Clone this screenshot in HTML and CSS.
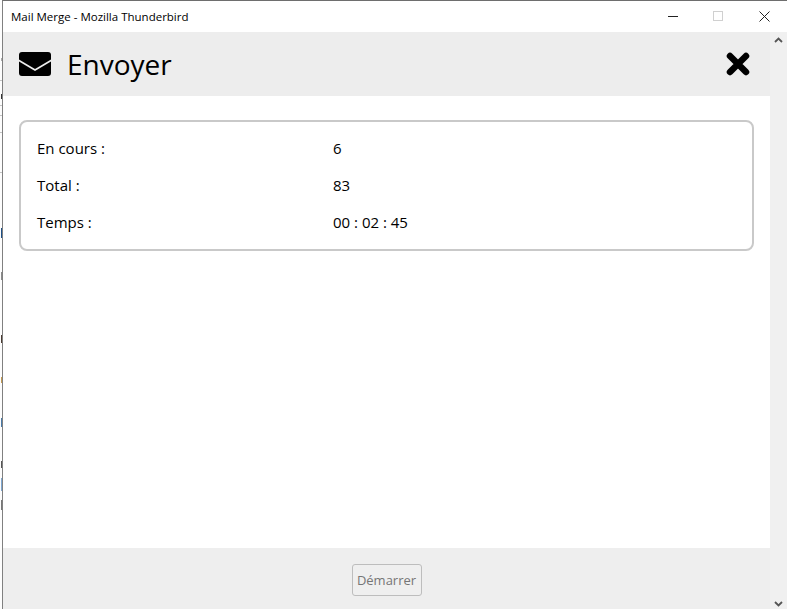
FILE: index.html
```html
<!DOCTYPE html>
<html lang="fr">
<head>
<meta charset="utf-8">
<title>Mail Merge - Mozilla Thunderbird</title>
<link rel="stylesheet" href="styles.css">
</head>
<body>
<div class="desktop">
  <div class="behind">
    <i class="mark mark-a"></i><i class="mark mark-b"></i><i class="mark mark-c"></i><i class="mark mark-d"></i><i class="mark mark-e"></i><i class="mark mark-f"></i><i class="mark mark-g"></i><i class="mark mark-h"></i><i class="mark mark-i"></i><i class="mark mark-j"></i>
    <i class="tick tick-a"></i><i class="tick tick-b"></i><i class="tick tick-c"></i><i class="tick tick-d"></i><i class="tick tick-e"></i>
  </div>
  <div class="window">
    <div class="titlebar">
      <span class="title">Mail Merge - Mozilla Thunderbird</span>
      <div class="controls">
        <svg class="ctl" width="11" height="11" viewBox="0 0 11 11"><path d="M0 5.500h10" stroke="#222" fill="none"/></svg>
        <svg class="ctl" width="11" height="11" viewBox="0 0 11 11"><rect x="0.500" y="0.500" width="9" height="9" fill="none" stroke="#d0d0d0"/></svg>
        <svg class="ctl ctl-close" width="11" height="11" viewBox="0 0 11 11"><path d="M0.500 0.500l10 10M10.500 0.500l-10 10" stroke="#222" fill="none"/></svg>
      </div>
    </div>
    <div class="frame">
      <div class="main">
        <header class="head">
          <div class="head-left">
            <svg class="mail" width="32" height="24" viewBox="0 0 32 24"><path d="M3 0h26a3 3 0 0 1 3 3v4.500L16 17 0 7.500V3a3 3 0 0 1 3-3z" fill="#000"/><path d="M0 9.500V21a3 3 0 0 0 3 3h26a3 3 0 0 0 3-3V9.500L16 19z" fill="#000"/></svg>
            <h1 class="heading">Envoyer</h1>
          </div>
          <svg class="close" width="24" height="24" viewBox="0 0 24 24"><path d="M4 4l16 16M20 4L4 20" stroke="#000" stroke-width="6.500" stroke-linecap="round" fill="none"/></svg>
        </header>
        <section class="content">
          <div class="card">
            <div class="row"><span class="label">En cours :</span><span>6</span></div>
            <div class="row"><span class="label">Total :</span><span>83</span></div>
            <div class="row"><span class="label">Temps :</span><span>00 : 02 : 45</span></div>
          </div>
        </section>
        <footer class="foot"><button class="start" disabled>Démarrer</button></footer>
      </div>
      <div class="scrollbar">
        <svg width="9" height="6" viewBox="0 0 9 6"><path d="M1 5l3.500-3.500L8 5" stroke="#555" stroke-width="1.800" fill="none"/></svg>
        <svg width="9" height="6" viewBox="0 0 9 6"><path d="M1 1l3.500 3.500L8 1" stroke="#555" stroke-width="1.800" fill="none"/></svg>
      </div>
    </div>
  </div>
</div>
</body>
</html>
```
FILE: styles.css
```css
html, body { margin: 0; padding: 0; }
body { width: 787px; height: 609px; overflow: hidden; background: #fff; font-family: "Open Sans", "Noto Sans", sans-serif; color: #000; }
.desktop { display: flex; width: 787px; height: 609px; }
.behind { position: relative; width: 2px; flex: none; background: #fdfdfd; }
.mark { position: absolute; left: 1px; width: 1px; height: 8px; }
.mark-a { top: 228px; height: 10px; background: #1d4f86; }
.mark-b { top: 272px; background: #8a8a8a; }
.mark-c { top: 335px; background: #4a3a30; }
.mark-d { top: 377px; background: #c49a50; height: 6px; }
.mark-e { top: 418px; background: #4a7aa8; height: 9px; }
.mark-f { top: 461px; background: #555; height: 7px; }
.mark-g { top: 478px; background: #7fa8d2; height: 13px; }
.mark-h { top: 500px; background: #777; height: 10px; }
.mark-i { top: 94px; background: #333; height: 5px; }
.mark-j { top: 58px; background: #aaa; height: 3px; }
.tick { position: absolute; left: 0; width: 2px; height: 1px; background: #c4c4c4; }
.tick-a { top: 80px; }
.tick-b { top: 105px; }
.tick-c { top: 115px; }
.tick-d { top: 132px; }
.tick-e { top: 172px; }
.window { flex: 1; display: flex; flex-direction: column; border-left: 1px solid #808080; border-top: 1px solid #6e6e6e; min-width: 0; }
.titlebar { height: 31px; flex: none; display: flex; justify-content: space-between; align-items: center; background: #fff; padding-left: 8px; }
.title { font-size: 11.500px; color: #000; }
.controls { display: flex; gap: 34px; padding-right: 17px; }
.ctl { display: block; }
.ctl-close { margin-left: 1px; }
.frame { flex: 1; display: flex; min-height: 0; background: #f0f0f0; }
.main { flex: 1; display: flex; flex-direction: column; min-width: 0; }
.head { height: 64px; flex: none; display: flex; justify-content: space-between; align-items: center; background: #ededed; padding: 0 20px 0 16px; }
.head-left { display: flex; align-items: center; gap: 16px; }
.mail { display: block; }
.heading { margin: 0; font-size: 28px; font-weight: 400; line-height: 1; }
.close { display: block; }
.content { flex: 1; background: #fff; padding: 24px 16px 0 16px; }
.card { border: 2px solid #c9c9c9; border-radius: 8px; padding: 7px 16px 9px; height: 131px; box-sizing: border-box; display: flex; flex-direction: column; justify-content: center; }
.row { display: flex; height: 37px; align-items: center; font-size: 15px; }
.label { width: 296px; flex: none; }
.foot { height: 61px; flex: none; display: flex; justify-content: center; align-items: center; background: #eeeeee; padding-top: 2px; box-sizing: border-box; }
.start { width: 70px; height: 32px; padding: 0; border: 1px solid #bdbdbd; border-radius: 3px; background: #efefef; color: #767676; font: inherit; font-size: 13px; }
.scrollbar { width: 17px; flex: none; display: flex; flex-direction: column; justify-content: space-between; align-items: center; padding: 5px 0 2px; box-sizing: border-box; background: #f0f0f0; }
.scrollbar svg { display: block; }
```
